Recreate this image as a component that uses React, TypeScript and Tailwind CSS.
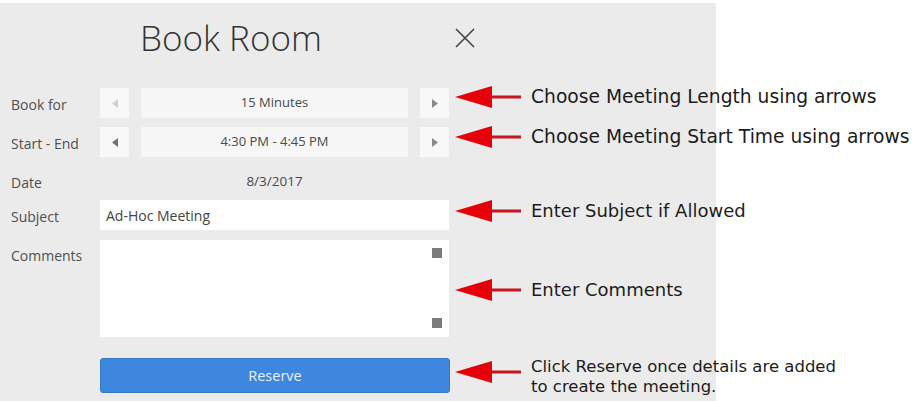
import type { ReactNode } from 'react'

const ui = { fontFamily: '"Open Sans", "Noto Sans", sans-serif' }
const note = { fontFamily: '"DejaVu Sans", "Liberation Sans", sans-serif' }

function Tri({ dir, tone }: { dir: 'left' | 'right'; tone: string }) {
  return (
    <svg width="6" height="9" viewBox="0 0 6 9" className={tone}>
      {dir === 'left' ? <path d="M6 0 L0 4.5 L6 9 Z" fill="currentColor" /> : <path d="M0 0 L6 4.5 L0 9 Z" fill="currentColor" />}
    </svg>
  )
}

function Row({ label, children, h = 'h-[30px]', top = false }: { label: string; children: ReactNode; h?: string; top?: boolean }) {
  return (
    <div className={`grid grid-cols-[100px_349px] ${h}`}>
      <div className={`pl-[11px] text-[14px] text-[#505050] ${top ? 'pt-[5px]' : 'flex items-center pt-[3px]'}`}>{label}</div>
      {children}
    </div>
  )
}

function Stepper({ value, leftTone }: { value: string; leftTone: string }) {
  return (
    <div className="grid grid-cols-[29px_1fr_29px] gap-[12px]">
      <button type="button" className="flex items-center justify-center bg-[#f8f8f8]">
        <Tri dir="left" tone={leftTone} />
      </button>
      <div className="flex items-center justify-center bg-[#f6f6f6] text-[13px] text-[#4a4a4a]">{value}</div>
      <button type="button" className="flex items-center justify-center bg-[#f8f8f8]">
        <Tri dir="right" tone="text-[#8a8a8a]" />
      </button>
    </div>
  )
}

function Callout({ top, size, children, twoLine = false }: { top: number; size: string; children: ReactNode; twoLine?: boolean }) {
  // red pointer arrow plus its caption, laid over the form
  return (
    <div className={`absolute left-[455px] flex ${twoLine ? 'items-start' : 'items-center'}`} style={{ top }}>
      <svg width="66" height="22" viewBox="0 0 66 22" className={twoLine ? 'mt-[4px]' : ''}>
        <path d="M0 11 L37 0 L37 22 Z" fill="#e5000a" />
        <rect x="36" y="9.5" width="30" height="3" fill="#c4161c" />
      </svg>
      <div className={`ml-[10px] ${size} leading-[20px] text-[#1c1c1c] whitespace-nowrap`} style={note}>
        {children}
      </div>
    </div>
  )
}

export default function App() {
  return (
    <div className="relative w-[914px] h-[401px] overflow-hidden bg-white" style={ui}>
      <div className="mt-[3px] w-[716px] h-[398px] bg-[#ebebeb]">
        <div className="relative flex h-[70px] items-center">
          <h1 className="w-[462px] text-center text-[35px] font-light text-[#333]">Book Room</h1>
          <button type="button" className="absolute left-[455px] top-[25px] text-[#444]">
            <svg width="20" height="20" viewBox="0 0 20 20">
              <path d="M1 1 L19 19 M19 1 L1 19" stroke="currentColor" strokeWidth="1.6" />
            </svg>
          </button>
        </div>

        <div className="mt-[15px] flex flex-col">
          <Row label="Book for">
            <Stepper value="15 Minutes" leftTone="text-[#cfcfcf]" />
          </Row>
          <div className="mt-[9px]">
            <Row label="Start - End">
              <Stepper value="4:30 PM - 4:45 PM" leftTone="text-[#707070]" />
            </Row>
          </div>
          <div className="mt-[9px]">
            <Row label="Date">
              <div className="flex items-center justify-center text-[13.5px] text-[#4a4a4a]">8/3/2017</div>
            </Row>
          </div>
          <div className="mt-[4px]">
            <Row label="Subject">
              <div className="flex items-center bg-white pl-[6px] text-[14px] text-[#444]">Ad-Hoc Meeting</div>
            </Row>
          </div>
          <div className="mt-[10px]">
            <Row label="Comments" h="h-[97px]" top>
              <div className="flex flex-col items-end justify-between bg-white pt-[8px] pr-[7px] pb-[9px]">
                <span className="block h-[10px] w-[10px] bg-[#7c7c7c]" />
                <span className="block h-[10px] w-[10px] bg-[#7c7c7c]" />
              </div>
            </Row>
          </div>
          <div className="mt-[21px] pl-[100px]">
            <button
              type="button"
              className="h-[35px] w-[350px] rounded-[3px] border border-[#3579c9] bg-[#3d87df] text-[14.5px] text-[#e8f0fb]"
            >
              Reserve
            </button>
          </div>
        </div>
      </div>

      <Callout top={86} size="text-[18.7px]">Choose Meeting Length using arrows</Callout>
      <Callout top={126} size="text-[18.7px]">Choose Meeting Start Time using arrows</Callout>
      <Callout top={200} size="text-[18px]">Enter Subject if Allowed</Callout>
      <Callout top={279} size="text-[18px]">Enter Comments</Callout>
      <Callout top={357} size="text-[16.5px]" twoLine>
        Click Reserve once details are added
        <br />
        to create the meeting.
      </Callout>
    </div>
  )
}
